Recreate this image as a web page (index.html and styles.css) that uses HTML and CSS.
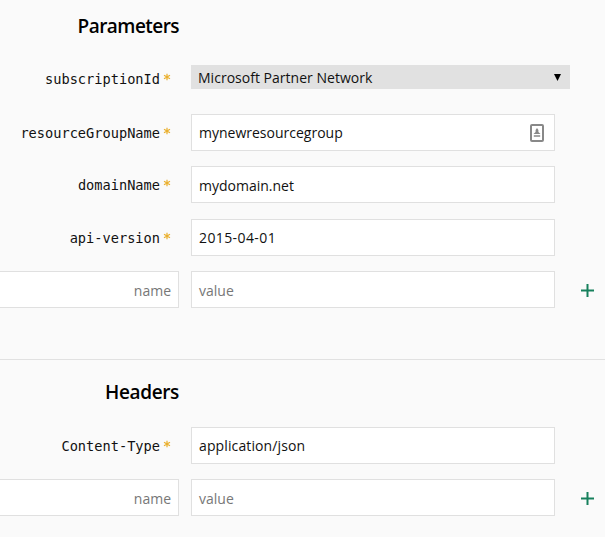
FILE: index.html
```html
<!DOCTYPE html>
<html lang="en">
<head>
<meta charset="utf-8">
<title>Request parameters</title>
<link rel="stylesheet" href="styles.css">
</head>
<body>
<section class="group parameters">
  <h2 class="parameters-title">Parameters</h2>
  <div class="row select-row">
    <label class="label">subscriptionId<span class="star"><svg viewBox="0 0 8 8"><path d="M4 .7v6.6M1 2.3l6 3.4M7 2.3l-6 3.4"/></svg></span></label>
    <div class="select"><span class="t-select">Microsoft Partner Network</span><svg class="arrow" viewBox="0 0 7 7"><path d="M0 0h7L3.5 7z"/></svg></div>
  </div>
  <div class="row">
    <label class="label">resourceGroupName<span class="star"><svg viewBox="0 0 8 8"><path d="M4 .7v6.6M1 2.3l6 3.4M7 2.3l-6 3.4"/></svg></span></label>
    <div class="field"><span class="t-group">mynewresourcegroup</span>
      <svg class="contact" viewBox="0 0 16 20"><rect x="2" y="2" width="12" height="16" rx="1"/><path d="M8 5l1.4 2v2.1l2.1 2h-7l2.1-2V7zM4.8 12.2h6.4v1.6H4.8z"/></svg>
    </div>
  </div>
  <div class="row">
    <label class="label">domainName<span class="star"><svg viewBox="0 0 8 8"><path d="M4 .7v6.6M1 2.3l6 3.4M7 2.3l-6 3.4"/></svg></span></label>
    <div class="field"><span class="t-domain">mydomain.net</span></div>
  </div>
  <div class="row lower">
    <label class="label">api-version<span class="star"><svg viewBox="0 0 8 8"><path d="M4 .7v6.6M1 2.3l6 3.4M7 2.3l-6 3.4"/></svg></span></label>
    <div class="field"><span class="t-date">2015-04-01</span></div>
  </div>
  <div class="row">
    <div class="field name"><span class="t-name">name</span></div>
    <div class="field hint"><span class="t-value">value</span></div>
    <svg class="plus" viewBox="0 0 13 13"><path d="M0 6.5h13M6.5 0v13"/></svg>
  </div>
</section>
<section class="group headers">
  <h2 class="headers-title">Headers</h2>
  <div class="row">
    <label class="label">Content-Type<span class="star"><svg viewBox="0 0 8 8"><path d="M4 .7v6.6M1 2.3l6 3.4M7 2.3l-6 3.4"/></svg></span></label>
    <div class="field"><span class="t-json">application/json</span></div>
  </div>
  <div class="row">
    <div class="field name"><span class="t-name">name</span></div>
    <div class="field hint"><span class="t-value">value</span></div>
    <svg class="plus" viewBox="0 0 13 13"><path d="M0 6.5h13M6.5 0v13"/></svg>
  </div>
</section>
</body>
</html>
```
FILE: styles.css
```css
* { box-sizing: border-box; }
body {
  margin: 0;
  background: #fafafa;
  color: #111;
  font: 14px/20px "Open Sans", "Noto Sans", sans-serif;
  overflow: hidden;
}
.group { display: flex; flex-direction: column; }
.parameters { height: 360px; border-bottom: 1px solid #e1e1e1; }
h2 {
  width: 179px;
  margin: 0;
  text-align: right;
  font-size: 19px;
  font-weight: 600;
  line-height: 26px;
  color: #000;
}
.parameters h2 { margin-top: 13px; margin-bottom: 26px; letter-spacing: -.55px; }
.headers h2 { margin-top: 19px; margin-bottom: 22px; letter-spacing: -.35px; }
.row {
  display: grid;
  grid-template-columns: 179px 364px 13px;
  column-gap: 12px;
  height: 37px;
  margin-bottom: 15px;
  align-items: center;
}
.row .plus { margin: 2px 0 0 14px; }
.select-row { grid-template-columns: 179px 379px; height: 24px; margin-bottom: 25px; }
.select-row .label { padding-top: 4px; }
.lower { margin-top: 1px; }
.label {
  display: flex;
  justify-content: flex-end;
  align-items: center;
  padding-right: 8px;
  font: 13.65px/20px "DejaVu Sans Mono", monospace;
}
.star { width: 8px; height: 12px; margin-left: 3px; }
.star svg { display: block; width: 8px; height: 8px; fill: none; stroke: #eab02e; stroke-width: 1.2; }
.field {
  display: flex;
  justify-content: space-between;
  align-items: center;
  height: 37px;
  padding: 0 7px;
  border: 1px solid #e0e0e0;
  background: #fff;
}
.hint, .name { color: #777; padding-top: 2px; }
.name { justify-content: flex-end; border-left: 0; }
.t-domain { padding-top: 2px; }
.t-date { letter-spacing: .4px; }
.t-json { letter-spacing: .12px; }
.t-select { letter-spacing: .02px; }
.select {
  display: flex;
  justify-content: space-between;
  align-items: center;
  height: 24px;
  padding: 1px 9px 0 7px;
  background: #e1e1e1;
}
.arrow { width: 7px; height: 7px; fill: #000; }
.contact { width: 16px; height: 20px; margin-right: 2px; fill: #888; }
.contact rect { fill: #fff; stroke: #888; stroke-width: 2; }
.plus { width: 13px; height: 13px; overflow: visible; fill: none; stroke: #16805c; stroke-width: 2; }
```
